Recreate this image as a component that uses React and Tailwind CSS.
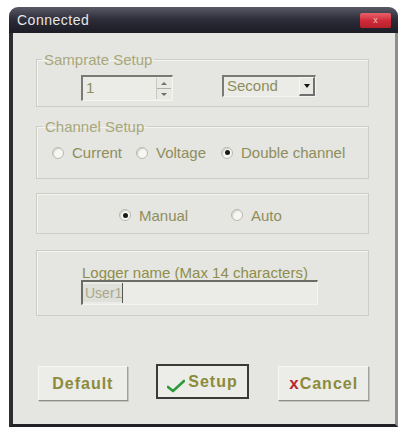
import React from "react";

const font = { fontFamily: '"Liberation Sans", Arial, sans-serif' };

function Radio({ checked, label, className = "" }) {
  return (
    <div className={"flex items-center " + className}>
      <div className="w-[12px] h-[12px] rounded-full border border-[#b9b9b0] bg-[#f6f6f2] flex items-center justify-center shadow-[inset_1px_1px_1px_#d0d0c8]">
        {checked && <div className="w-[5px] h-[5px] rounded-full bg-[#1a1a1a]" />}
      </div>
      <span className="ml-[8px] text-[15px] leading-[17px] text-[#8e8e5c]">{label}</span>
    </div>
  );
}

function Btn({ children, primary }) {
  return (
    <div
      className={
        "h-[35px] flex items-center justify-center bg-[#ecece8] " +
        (primary
          ? "border-2 border-[#3a3a3a]"
          : "border border-[#f7f7f4] border-r-[#a2a29c] border-b-[#8e8e88] shadow-[1px_1px_0_#c4c4be]")
      }
    >
      {children}
    </div>
  );
}

export default function App() {
  return (
    <div className="w-[408px] h-[438px] bg-white overflow-hidden" style={font}>
      <div className="ml-[9px] mt-[7px] w-[389px] h-[420px] flex flex-col rounded-t-[9px] overflow-hidden">
        {/* Title bar */}
        <div className="h-[26px] flex items-center justify-between bg-gradient-to-b from-[#5a5a66] via-[#2c2c38] to-[#1c1c26] pl-[8px] pr-[7px]">
          <span className="text-[14px] text-[#e6e6e6] tracking-[0.5px]">Connected</span>
          <div className="w-[31px] h-[15px] rounded-[2px] bg-gradient-to-b from-[#e8606a] via-[#d02a3a] to-[#b8202c] flex items-center justify-center">
            <span className="text-[9px] leading-none text-[#f4c0c0]">x</span>
          </div>
        </div>
        {/* Client */}
        <div className="flex-1 flex flex-col bg-[#e5e5e1] border-l-4 border-l-[#2e2e32] border-r-[3px] border-r-[#8e8e8e] border-b-[3px] border-b-[#222226] pl-[23px] pr-[26px]">
          {/* Samprate Setup */}
          <fieldset className="mt-[18px] border border-[#cdcdc8] shadow-[inset_1px_1px_0_#f4f4f0] pt-[7px] pb-[5px]">
            <legend className="ml-[5px] px-[2px] text-[15px] leading-[17px] text-[#a8a87a]">Samprate Setup</legend>
            <div className="flex items-start pl-[44px]">
              <div className="w-[92px] h-[26px] flex border-t-2 border-l-2 border-[#7a7a74] border-r border-b border-r-[#f4f4f0] border-b-[#f4f4f0] bg-[#ebebe7]">
                <span className="flex-1 pl-[3px] text-[15px] leading-[22px] text-[#8e8e5c]">1</span>
                <div className="w-[15px] flex flex-col border-l border-[#c8c8c2] my-[1px] mr-[1px]">
                  <div className="flex-1 flex items-center justify-center border-b border-[#b0b0aa] bg-[#e9e9e4]">
                    <div className="w-0 h-0 border-l-[3px] border-r-[3px] border-b-[3px] border-l-transparent border-r-transparent border-b-[#707070]" />
                  </div>
                  <div className="flex-1 flex items-center justify-center bg-[#e9e9e4]">
                    <div className="w-0 h-0 border-l-[3px] border-r-[3px] border-t-[3px] border-l-transparent border-r-transparent border-t-[#707070]" />
                  </div>
                </div>
              </div>
              <div className="ml-[49px] w-[94px] h-[22px] flex border-t-2 border-l-2 border-[#7a7a74] border-r border-b border-r-[#f4f4f0] border-b-[#f4f4f0] bg-[#ebebe7]">
                <span className="flex-1 pl-[3px] text-[15px] leading-[18px] text-[#8e8e5c]">Second</span>
                <div className="w-[16px] flex items-center justify-center bg-[#e9e9e4] border-l border-t border-[#f6f6f2] border-r-2 border-b-2 border-r-[#707070] border-b-[#707070]">
                  <div className="w-0 h-0 border-l-[3px] border-r-[3px] border-t-[4px] border-l-transparent border-r-transparent border-t-[#111]" />
                </div>
              </div>
            </div>
          </fieldset>

          {/* Channel Setup */}
          <fieldset className="mt-[11px] border border-[#cdcdc8] shadow-[inset_1px_1px_0_#f4f4f0] pt-[9px] pb-[17px]">
            <legend className="ml-[6px] px-[2px] text-[15px] leading-[17px] text-[#a8a87a]">Channel Setup</legend>
            <div className="flex pl-[15px]">
              <Radio label="Current" className="w-[84px]" />
              <Radio label="Voltage" className="w-[85px]" />
              <Radio label="Double channel" checked />
            </div>
          </fieldset>

          {/* Manual / Auto */}
          <div className="mt-[14px] h-[41px] border border-[#cdcdc8] shadow-[inset_1px_1px_0_#f4f4f0] pl-[82px] pt-[3px] flex items-center">
            <Radio label="Manual" checked className="w-[112px]" />
            <Radio label="Auto" />
          </div>

          {/* Logger name */}
          <div className="mt-[16px] h-[66px] border border-[#cdcdc8] shadow-[inset_1px_1px_0_#f4f4f0] pl-[44px] pt-[14px] flex flex-col">
            <span className="ml-[1px] text-[15px] leading-[15px] text-[#8e8e4a]">Logger name (Max 14 characters)</span>
            <div className="w-[237px] h-[25px] flex items-center border-t-2 border-l-2 border-[#6c6c66] border-r border-b border-r-[#f4f4f0] border-b-[#f4f4f0] bg-[#ebebe7]">
              <span className="pl-[2px] text-[14px] leading-[18px] text-[#a8a890] bg-[#e0e0da]">User1</span>
              <div className="w-[1px] h-[20px] bg-[#555]" />
            </div>
          </div>

          {/* Buttons */}
          <div className="mt-[50px] flex items-start pl-[2px]">
            <div className="w-[90px]">
              <Btn>
                <span className="text-[16px] font-bold tracking-[1px] text-[#8b8b3a]">Default</span>
              </Btn>
            </div>
            <div className="w-[94px] ml-[28px] -mt-[2px]">
              <Btn primary>
                <svg width="18" height="14" viewBox="0 0 18 14" className="mt-[8px] mr-[3px]">
                  <path d="M1 8 L6 12 L17 2" fill="none" stroke="#2e9a3a" strokeWidth="2.6" strokeLinecap="round" strokeLinejoin="round" />
                </svg>
                <span className="text-[16px] font-bold tracking-[1px] text-[#8b8b3a]">Setup</span>
              </Btn>
            </div>
            <div className="w-[91px] ml-[29px]">
              <Btn>
                <span className="text-[17px] font-bold text-[#b82630] mr-[1px]">x</span>
                <span className="text-[16px] font-bold tracking-[1px] text-[#8b8b3a]">Cancel</span>
              </Btn>
            </div>
          </div>
        </div>
      </div>
    </div>
  );
}
